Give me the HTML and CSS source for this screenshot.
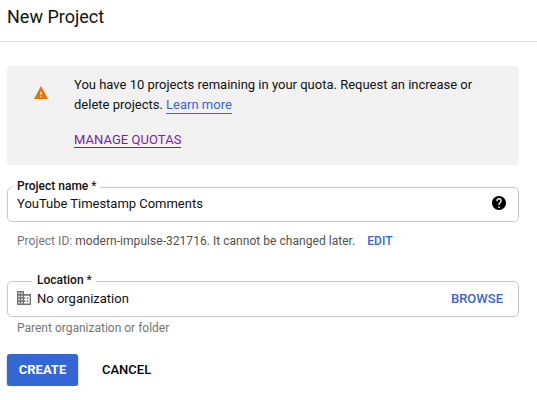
FILE: index.html
```
<!DOCTYPE html>
<html lang="en">
<head>
<meta charset="utf-8">
<title>New Project</title>
<link rel="stylesheet" href="styles.css">
</head>
<body>
<header class="header"><h1 class="title">New Project</h1></header>
<main class="content">
  <section class="notice">
    <svg class="warning" viewBox="1 2 22 19" preserveAspectRatio="none"><path fill="#e37400" d="M1 21h22L12 2z"/><path fill="#f1f1f1" d="M11 10h2v5h-2zM11 16.500h2v2h-2z"/></svg>
    <div class="notice-body">
      <p class="notice-text">You have 10 projects remaining in your quota. Request an increase or<br>delete projects. <a class="learn">Learn more</a></p>
      <a class="manage">MANAGE QUOTAS</a>
    </div>
  </section>
  <fieldset class="field name-field">
    <legend class="label">Project name <span class="star">*</span></legend>
    <div class="row">
      <span class="value name-value">YouTube Timestamp Comments</span>
      <svg class="help" viewBox="2 2 20 20"><path d="M12 2C6.480 2 2 6.480 2 12s4.480 10 10 10 10-4.480 10-10S17.520 2 12 2zm1 17h-2v-2h2v2zm2.070-7.750l-.9.920C13.450 12.900 13 13.500 13 15h-2v-.5c0-1.100.45-2.100 1.170-2.830l1.240-1.260c.37-.36.59-.86.59-1.410 0-1.100-.9-2-2-2s-2 .9-2 2H8c0-2.210 1.790-4 4-4s4 1.790 4 4c0 .88-.36 1.680-.93 2.250z"/></svg>
    </div>
  </fieldset>
  <p class="hint id-hint">Project ID: <span class="project-id">modern-impulse-321716. It cannot be changed later.</span><a class="edit">EDIT</a></p>
  <fieldset class="field location-field">
    <legend class="label">Location <span class="star">*</span></legend>
    <div class="row">
      <svg class="building" viewBox="2 3 20 18" preserveAspectRatio="none"><path fill="#757575" d="M12 7V3H2v18h20V7H12zM6 19H4v-2h2v2zm0-4H4v-2h2v2zm0-4H4V9h2v2zm0-4H4V5h2v2zm4 12H8v-2h2v2zm0-4H8v-2h2v2zm0-4H8V9h2v2zm0-4H8V5h2v2zm10 12h-8v-2h2v-2h-2v-2h2v-2h-2V9h8v10zm-2-8h-2v2h2v-2zm0 4h-2v2h2v-2z"/></svg>
      <span class="value">No organization</span>
      <a class="browse">BROWSE</a>
    </div>
  </fieldset>
  <p class="hint parent-hint">Parent organization or folder</p>
  <div class="actions">
    <button class="create">CREATE</button>
    <button class="cancel">CANCEL</button>
  </div>
</main>
</body>
</html>
```
FILE: styles.css
```
* { box-sizing: border-box; }
body { margin: 0; background: #fff; color: #111; font-family: Roboto, "Liberation Sans", sans-serif; font-size: 13px; overflow: hidden; }
p { margin: 0; }
.header { height: 42px; border-bottom: 1px solid #dcdcdc; padding: 6px 7px 0; }
.title { margin: 0; font-size: 18px; font-weight: 400; line-height: 22px; }
.content { padding: 24px 18px 0 7px; }
.notice { height: 99px; border-radius: 4px; background: #f1f1f1; display: flex; padding: 9px 0 0 27px; }
.warning { width: 14px; height: 13px; margin-top: 11px; flex: none; }
.notice-body { margin-left: 26px; white-space: nowrap; }
.notice-text { line-height: 20px; }
.learn { display: inline-block; line-height: 16px; color: #3367d6; border-bottom: 1px solid #3367d6; }
.manage { display: inline-block; margin-top: 17px; line-height: 15px; letter-spacing: .05px; color: #7b1fa2; border-bottom: 1px solid #7b1fa2; }
.field { margin: 0; min-width: 0; border: 1px solid #c8c8c8; border-radius: 5px; }
.label { font-size: 12px; font-weight: 500; line-height: 15px; padding: 0 4px 1px 5px; }
.star { font-weight: 400; }
.name-field { height: 43px; margin-top: 14px; padding: 0 12px 0 4px; }
.location-field { height: 44px; margin-top: 24px; padding: 0 15px 0 9px; }
.location-field .label { margin-left: 15px; }
.row { display: flex; align-items: center; height: 20px; margin-top: -1px; }
.name-field .row { margin-top: -2px; }
.name-value { margin-left: 5px; letter-spacing: -.02px; }
.help { width: 14px; height: 14px; margin-left: auto; }
.building { width: 14px; height: 14px; margin-right: 6px; }
.browse { margin-left: auto; color: #3367d6; font-weight: 500; }
.hint { padding-left: 10px; font-size: 12px; line-height: 16px; color: #757575; white-space: nowrap; }
.id-hint { margin-top: 11px; letter-spacing: .04px; }
.project-id { color: #505050; }
.edit { margin-left: 12px; color: #3367d6; font-weight: 500; }
.parent-hint { margin-top: 3px; }
.actions { display: flex; margin-top: 18px; }
button { height: 32px; padding: 0 0 1px; border: 0; font: 500 13px Roboto, sans-serif; background: none; }
.create { width: 71px; border-radius: 3px; background: #3367d6; color: #fff; font-weight: 700; box-shadow: 0 1px 2px #0006; }
.cancel { margin-left: 24px; color: #000; }
```
